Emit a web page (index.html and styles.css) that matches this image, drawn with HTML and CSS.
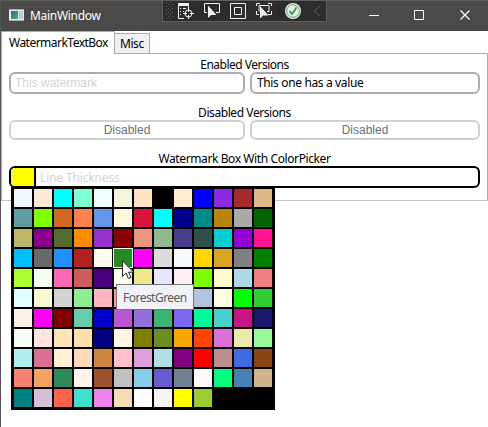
FILE: index.html
```
<!DOCTYPE html>
<html lang="en">
<head>
<meta charset="utf-8">
<title>MainWindow</title>
<link rel="stylesheet" href="styles.css">
</head>
<body>
<div class="window">
  <header class="titlebar">
    <svg class="app-icon" width="16" height="14" viewBox="0 0 16 14"><defs><linearGradient id="g" x2="1" y2="1"><stop stop-color="#2d62a8"/><stop offset="1" stop-color="#53b06b"/></linearGradient></defs><path fill="#e9edf0" d="M0 0h15v12H0z"/><path fill="#a5adb3" d="M0 0h15v1H0zM0 11h15v1H0z"/><path fill="url(#g)" d="M2 2h7v8H2z"/><path fill="#a9b9ca" d="M10 2h1.500v8H10zM12.500 2H14v8h-1.500z"/></svg>
    <span class="title">MainWindow</span>
    <svg class="controls" width="118" height="31" viewBox="0 0 118 31" fill="none" stroke="#fff"><path d="M-1 15.500h10"/><path d="M44.500 10.500h9v9h-9z"/><path stroke-width="1.200" d="M90.500 10.500l9 9m0-9l-9 9"/></svg>
  </header>
  <svg class="debugbar" width="166" height="22" viewBox="0 0 166 22" fill="none" stroke="#f1f1f1">
    <path fill="#2d2d30" stroke="#606062" d="M.5.5h164v21H.5z"/>
    <path stroke="#606064" stroke-dasharray="1 3" d="M4 2.500h5M6 4.500h5M4 6.500h5M6 8.500h5M4 10.500h5M6 12.500h5M4 14.500h5M6 16.500h5M4 18.500h5"/>
    <path stroke="none" fill="#f1f1f1" d="M16 3h11v3H16z"/><path d="M16.500 4v14.500H22M26.500 5v4M18 8.500h1m2 0h3M18 11.500h1m2 0h1M18 14.500h1"/>
    <circle cx="26.500" cy="13.500" r="3.500"/><path d="M26.500 8v4m0 3v4M21 13.500h4m3 0h4"/>
    <path d="M45 12.500h-2.500v-9h15v9H54"/><path stroke="none" fill="#f1f1f1" d="M46 5.500v12.500l3-3h5.500z"/>
    <path d="M68.500 3.500h15v15h-15zM72.500 7.500h7v7h-7z"/>
    <path d="M94.500 6V3.500H98M106 3.500h3.500V6M109.500 11v3.500H106M97 14.500h-2.500V11M97 11.500V5.500h10v6h-2"/><path stroke="none" fill="#f1f1f1" d="M98 6v12.500l3-3h5.500z"/>
    <path stroke="#222224" d="M116.500 4v14"/>
    <circle cx="131" cy="11" r="8" stroke="none" fill="#e8eee8"/><circle cx="131" cy="11" r="6.300" stroke="#58a85a"/><path stroke="#36983a" stroke-width="1.700" d="M127.500 11l2.500 3 4.500-6.500"/>
    <path stroke="#66666a" d="M157.500 6l-5 5 5 5"/>
  </svg>
  <nav class="tabs"><div class="tab active">WatermarkTextBox</div><div class="tab">Misc</div></nav>
  <main class="pane">
    <h2 class="label l-enabled">Enabled Versions</h2>
    <div class="row enabled">
      <div class="field"><span class="hint arial">This watermark</span></div>
      <div class="field"><span class="value">This one has a value</span></div>
    </div>
    <h2 class="label l-disabled">Disabled Versions</h2>
    <div class="row disabled">
      <div class="field">Disabled</div>
      <div class="field">Disabled</div>
    </div>
    <h2 class="label l-picker">Watermark Box With ColorPicker</h2>
    <div class="picker">
      <div class="current"></div><span class="hint thick">Line Thickness</span>
    </div>
  </main>
  <div class="popup" id="palette"></div>
  <div class="tooltip">ForestGreen</div>
  <svg class="cursor" width="13" height="20" viewBox="0 0 13 20"><path fill="#fff" stroke="#222" d="M.5.800v15.700l3.600-3.400 2.400 5.400 2.500-1.100-2.400-5.200h5z"/></svg>
</div>
<script src="palette.js"></script>
</body>
</html>
```
FILE: styles.css
```
* { box-sizing: border-box; }
body { margin: 0; background: #fff; color: #000; font: 12px/16px "Noto Sans", sans-serif; }
.window { position: relative; width: 488px; height: 427px; overflow: hidden; border-left: 1px solid #555; }
.titlebar { display: flex; align-items: center; height: 31px; padding-left: 8px; background: #4c4a48; border-top: 1px solid #5e5c5a; color: #fff; }
.app-icon { margin-right: 5px; }
.title { letter-spacing: -0.3px; }
.controls { margin-left: auto; overflow: visible; margin-top: -1px; }
.debugbar { position: absolute; left: 161px; top: 0; }
.tabs { display: flex; align-items: flex-end; height: 22px; }
.tab { height: 20px; width: 35px; border: 1px solid #acacac; border-bottom: 0; border-left: 0; background: #f0f0f0; padding: 2px 0 0 5px; white-space: nowrap; letter-spacing: -0.45px; }
.tab.active { position: relative; width: 114px; height: 23px; margin-bottom: -1px; border-left: 1px solid #acacac; background: #fff; padding: 3px 0 0 7px; letter-spacing: -0.52px; }
.pane { height: 148px; border: 1px solid #acacac; border-bottom-color: #c8c8c8; padding: 3px 7px 0; }
.label { margin: 0; height: 15px; font-size: 12px; font-weight: 400; line-height: 16px; text-align: center; white-space: nowrap; }
.l-enabled { letter-spacing: -0.5px; }
.row { display: grid; grid-template-columns: 236px 230px; gap: 5px; }
.field { border: 2px solid #abadb3; border-radius: 6px; background: #fff; white-space: nowrap; }
.enabled .field { height: 22px; padding-left: 4px; line-height: 18px; }
.enabled .value { padding-left: 1px; letter-spacing: -0.36px; }
.disabled .field { height: 20px; border-color: #d0d1d6; color: #707070; font: 12px/16px "Liberation Sans", sans-serif; text-align: center; }
.l-disabled { margin-top: 11px; letter-spacing: -0.42px; }
.l-picker { margin-top: 11px; letter-spacing: -0.4px; }
.hint { color: #d3d3d3; }
.arial { font-family: "Liberation Sans", sans-serif; }
.thick { letter-spacing: -0.15px; }
.picker { display: flex; width: 471px; height: 22px; border: 2px solid #000; border-radius: 6px; overflow: hidden; line-height: 19px; }
.current { width: 25px; margin-right: 4px; background: #ff0; border-right: 2px solid #000; }
.popup { position: absolute; left: 10px; top: 187px; width: 264px; height: 223px; display: grid; grid-template-columns: repeat(13, 18px); grid-auto-rows: 18px; gap: 2px; padding: 2px 3px; background: #000; }
.swatch.selected { outline: 1px solid #fff; }
.tooltip { position: absolute; left: 115px; top: 284px; width: 78px; height: 26px; border: 1px solid #767676; background: #f1f2f7; color: #575757; padding: 5px 0 0 6px; white-space: nowrap; letter-spacing: -0.52px; }
.cursor { position: absolute; left: 121px; top: 260px; }
```
FILE: palette.js
```
const names = `AliceBlue AntiqueWhite Aqua Aquamarine Azure Beige Bisque Black BlanchedAlmond Blue BlueViolet Brown BurlyWood
CadetBlue Chartreuse Chocolate Coral CornflowerBlue Cornsilk Crimson Cyan DarkBlue DarkCyan DarkGoldenrod DarkGray DarkGreen
DarkKhaki DarkMagenta DarkOliveGreen DarkOrange DarkOrchid DarkRed DarkSalmon DarkSeaGreen DarkSlateBlue DarkSlateGray DarkTurquoise DarkViolet DeepPink
DeepSkyBlue DimGray DodgerBlue Firebrick FloralWhite ForestGreen Fuchsia Gainsboro GhostWhite Gold Goldenrod Gray Green
GreenYellow Honeydew HotPink IndianRed Indigo Ivory Khaki Lavender LavenderBlush LawnGreen LemonChiffon LightBlue LightCoral
LightCyan LightGoldenrodYellow LightGray LightGreen LightPink LightSalmon LightSeaGreen LightSkyBlue LightSlateGray LightSteelBlue LightYellow Lime LimeGreen
Linen Magenta Maroon MediumAquamarine MediumBlue MediumOrchid MediumPurple MediumSeaGreen MediumSlateBlue MediumSpringGreen MediumTurquoise MediumVioletRed MidnightBlue
MintCream MistyRose Moccasin NavajoWhite Navy OldLace Olive OliveDrab Orange OrangeRed Orchid PaleGoldenrod PaleGreen
PaleTurquoise PaleVioletRed PapayaWhip PeachPuff Peru Pink Plum PowderBlue Purple Red RosyBrown RoyalBlue SaddleBrown
Salmon SandyBrown SeaGreen SeaShell Sienna Silver SkyBlue SlateBlue SlateGray Snow SpringGreen SteelBlue Tan
Teal Thistle Tomato Turquoise Violet Wheat White WhiteSmoke Yellow YellowGreen`.split(/\s+/);
const palette = document.getElementById("palette");
for (const name of names) {
  const swatch = document.createElement("div");
  swatch.className = name === "ForestGreen" ? "swatch selected" : "swatch";
  swatch.style.background = name;
  palette.append(swatch);
}
```
